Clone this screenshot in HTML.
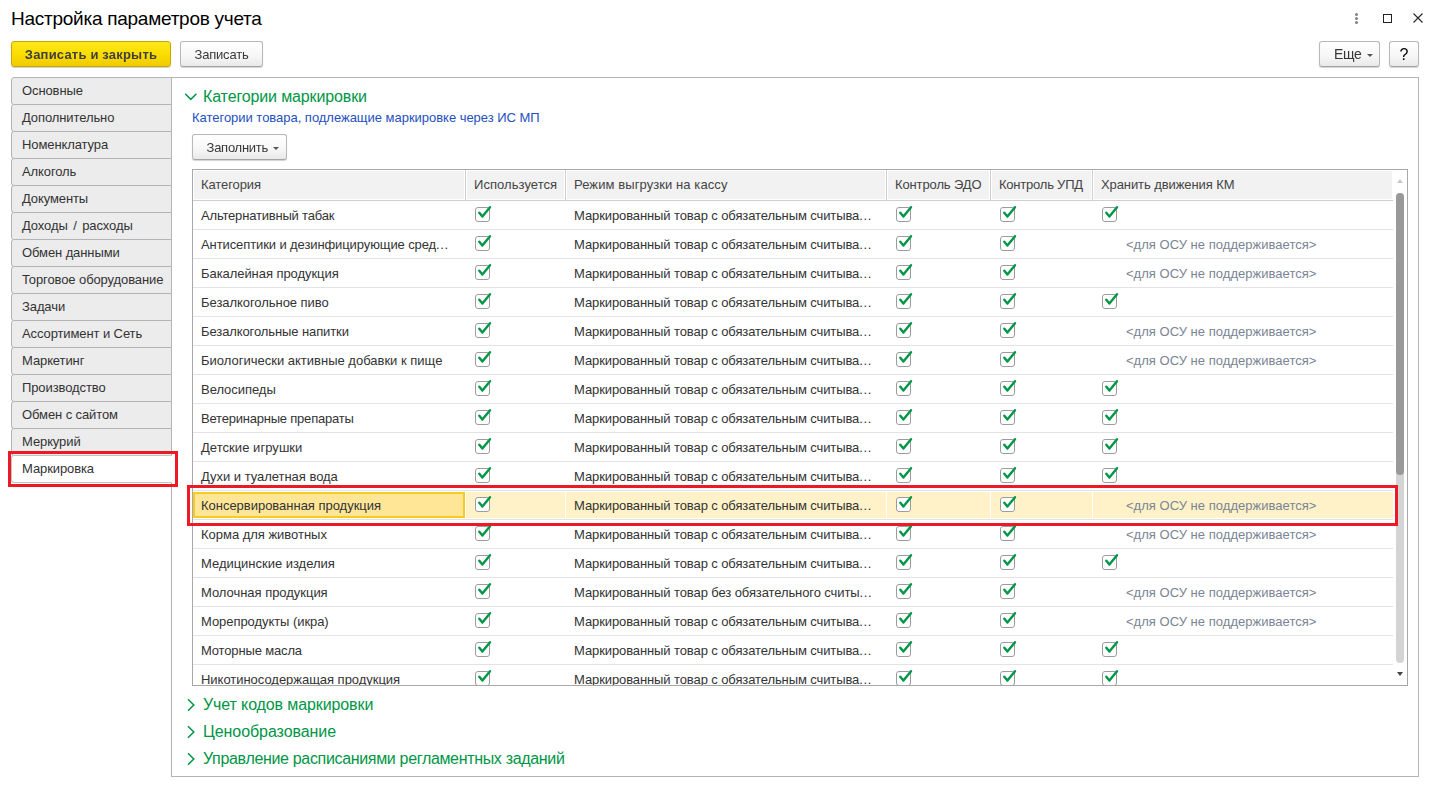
<!DOCTYPE html><html lang="ru"><head><meta charset="utf-8"><title>Настройка параметров учета</title><style>
*{box-sizing:border-box}
html,body{margin:0;padding:0}
body{width:1436px;height:786px;overflow:hidden;background:#fff;font-family:"Liberation Sans",sans-serif;font-size:13px;color:#333;position:relative}
.abs{position:absolute}
#title{left:11px;top:8px;font-size:19px;letter-spacing:-0.26px;line-height:22px;color:#000;white-space:nowrap}
.btn{position:absolute;top:41px;height:26px;border:1px solid #b8b8b8;border-bottom-color:#a4a4a4;border-radius:3px;background:linear-gradient(#fff,#f6f6f6 60%,#e9e9e9);box-shadow:0 1px 1px rgba(0,0,0,.18);font-size:13px;line-height:26px;text-align:center;color:#383838;white-space:nowrap;will-change:transform}
#b1{left:11px;width:160px;background:linear-gradient(#ffe818,#fadc00 55%,#efcb00);border-color:#c8a800;font-weight:bold;color:#404040;letter-spacing:0.19px}
#b2{left:180px;width:83px;letter-spacing:-0.2px}
#b3{left:1319px;width:61px}
#b4{left:1389px;width:30px;font-size:16px;color:#000;line-height:25px}
.tab{position:absolute;left:11px;width:161px;height:28px;border:1px solid #b4b4b4;border-radius:3px 0 0 3px;background:#ececec;padding-left:10px;line-height:25px;letter-spacing:-0.1px;white-space:nowrap;color:#333}
.tab.sel{background:#fff;border-color:#c4c4c4;border-right:none}
#panel{left:171px;top:77px;width:1248px;height:700px;border:1px solid #b4b4b4;background:#fff}
.sec{position:absolute;left:203px;font-size:16px;color:#009646;white-space:nowrap;line-height:20px}
.chev{position:absolute}
#sub{left:192px;top:110px;color:#2450c0;letter-spacing:-0.025px;white-space:nowrap;line-height:16px}
#fill{left:192px;top:134px;width:95px;height:26px}
#tbl{left:192px;top:169px;width:1216px;height:517px;border:1px solid #a8a8a8;overflow:hidden;background:#fff}
#hdr{position:absolute;left:1px;top:1px;width:1198px;height:28px;background:#f2f2f2}
#hline{position:absolute;left:0;top:30px;width:1200px;height:1px;background:#cfcfcf}
.hc{position:absolute;top:0px;height:30px;line-height:29px;padding-left:8px;white-space:nowrap;color:#444;border-left:1px solid #d0d0d0;box-shadow:inset 1px 0 0 #fff,-1px 0 0 #fff;letter-spacing:-0.1px}
.row{position:absolute;left:1px;width:1199px;height:29px;border-bottom:1px solid #e3e3e3}
.row::after{content:'';position:absolute;left:-1px;bottom:-1px;width:1px;height:1px;background:#e3e3e3}
.row.sel{background:#fff}
.row.sel .bg{position:absolute;left:0px;right:0;top:1px;bottom:1px;background:#fff2c8}
.row.sel .cur{position:absolute;left:-1px;top:1px;width:272px;height:26px;background:#ffe697;border:2px solid #f8cb22}
.vs{position:absolute;top:1px;height:26px;width:1px;background:#fff}
.c{position:absolute;top:0;height:28px;line-height:30px;white-space:nowrap;color:#333;letter-spacing:-0.1px}
.el{letter-spacing:0.65px}
.osu{letter-spacing:0}
.cb{position:absolute;top:4px}
.c.osu{color:#7a8494;letter-spacing:0.03px}
.red{position:absolute;border:3px solid #ec1a24}
</style></head><body>
<div id="title" class="abs">Настройка параметров учета</div>
<svg class="abs" style="left:1350px;top:8px" width="80" height="20" viewBox="0 0 80 20"><circle cx="6.5" cy="6.5" r="1.5" fill="#808080"/><circle cx="6.5" cy="10.5" r="1.5" fill="#808080"/><circle cx="6.5" cy="14.5" r="1.5" fill="#808080"/><rect x="33.5" y="6.5" width="8" height="8" fill="none" stroke="#222" stroke-width="1"/><path d="M63.5 5.5 L72.5 14.5 M72.5 5.5 L63.5 14.5" stroke="#2a2a2a" stroke-width="1.15" fill="none"/></svg>
<div id="b1" class="btn">Записать и закрыть</div>
<div id="b2" class="btn">Записать</div>
<div id="b3" class="btn" style="line-height:24px"><span style="font-size:14px;margin-left:8px;letter-spacing:-0.4px">Еще</span> <span class="arr" style="display:inline-block;width:0;height:0;border:3px solid transparent;border-top:3px solid #555;border-bottom:none;vertical-align:middle;margin-left:2px;position:relative;top:-0.5px"></span></div>
<div id="b4" class="btn">?</div>
<div id="panel" class="abs"></div>
<div class="tab" style="top:77px">Основные</div>
<div class="tab" style="top:104px">Дополнительно</div>
<div class="tab" style="top:131px">Номенклатура</div>
<div class="tab" style="top:158px">Алкоголь</div>
<div class="tab" style="top:185px">Документы</div>
<div class="tab" style="top:212px;word-spacing:2px">Доходы / расходы</div>
<div class="tab" style="top:239px">Обмен данными</div>
<div class="tab" style="top:266px">Торговое оборудование</div>
<div class="tab" style="top:293px">Задачи</div>
<div class="tab" style="top:320px">Ассортимент и Сеть</div>
<div class="tab" style="top:347px">Маркетинг</div>
<div class="tab" style="top:374px">Производство</div>
<div class="tab" style="top:401px">Обмен с сайтом</div>
<div class="tab" style="top:428px">Меркурий</div>
<div class="tab sel" style="top:455px">Маркировка</div>
<svg class="chev" style="left:184px;top:91px" width="14" height="12" viewBox="0 0 14 12"><path d="M1.2 2.8 L6.8 8.4 L12.4 2.8" fill="none" stroke="#009646" stroke-width="1.5"/></svg>
<div class="sec" style="top:87px;letter-spacing:-0.13px">Категории маркировки</div>
<div id="sub" class="abs">Категории товара, подлежащие маркировке через ИС МП</div>
<div id="fill" class="btn" style="padding-left:7px;line-height:25px;letter-spacing:-0.25px">Заполнить <span style="display:inline-block;width:0;height:0;border:3px solid transparent;border-top:3px solid #555;border-bottom:none;vertical-align:middle;margin-left:2px"></span></div>
<div id="tbl" class="abs">
<div id="hdr"></div><div id="hline"></div>
<div class="hc" style="left:1px;letter-spacing:-0.1px;border-left:none;box-shadow:none;padding-left:7px">Категория</div>
<div class="hc" style="left:272px;letter-spacing:0.06px">Используется</div>
<div class="hc" style="left:372px;letter-spacing:0.087px">Режим выгрузки на кассу</div>
<div class="hc" style="left:693px;letter-spacing:-0.12px">Контроль ЭДО</div>
<div class="hc" style="left:797px;letter-spacing:-0.22px">Контроль УПД</div>
<div class="hc" style="left:899px;letter-spacing:-0.09px">Хранить движения КМ</div>
<div class="row" style="top:31px">
<div class="c" style="left:7px;letter-spacing:-0.19px">Альтернативный табак</div>
<svg class="cb" style="left:281px" width="19" height="17" viewBox="0 0 19 17"><rect x="0.5" y="2.5" width="14" height="14" rx="2.5" ry="2.5" fill="#fff" stroke="#9c9c9c"/><path d="M4.3 7.8 L7.4 11.6 L15 2.2" fill="none" stroke="#009646" stroke-width="2.4" stroke-linejoin="round" stroke-linecap="round"/></svg>
<div class="c" style="left:380px">Маркированный товар с обязательным считыва<span class="el">...</span></div>
<svg class="cb" style="left:702px" width="19" height="17" viewBox="0 0 19 17"><rect x="0.5" y="2.5" width="14" height="14" rx="2.5" ry="2.5" fill="#fff" stroke="#9c9c9c"/><path d="M4.3 7.8 L7.4 11.6 L15 2.2" fill="none" stroke="#009646" stroke-width="2.4" stroke-linejoin="round" stroke-linecap="round"/></svg>
<svg class="cb" style="left:806px" width="19" height="17" viewBox="0 0 19 17"><rect x="0.5" y="2.5" width="14" height="14" rx="2.5" ry="2.5" fill="#fff" stroke="#9c9c9c"/><path d="M4.3 7.8 L7.4 11.6 L15 2.2" fill="none" stroke="#009646" stroke-width="2.4" stroke-linejoin="round" stroke-linecap="round"/></svg>
<svg class="cb" style="left:908px" width="19" height="17" viewBox="0 0 19 17"><rect x="0.5" y="2.5" width="14" height="14" rx="2.5" ry="2.5" fill="#fff" stroke="#9c9c9c"/><path d="M4.3 7.8 L7.4 11.6 L15 2.2" fill="none" stroke="#009646" stroke-width="2.4" stroke-linejoin="round" stroke-linecap="round"/></svg>
</div>
<div class="row" style="top:60px">
<div class="c" style="left:7px;letter-spacing:-0.1px">Антисептики и дезинфицирующие сред<span class="el">...</span></div>
<svg class="cb" style="left:281px" width="19" height="17" viewBox="0 0 19 17"><rect x="0.5" y="2.5" width="14" height="14" rx="2.5" ry="2.5" fill="#fff" stroke="#9c9c9c"/><path d="M4.3 7.8 L7.4 11.6 L15 2.2" fill="none" stroke="#009646" stroke-width="2.4" stroke-linejoin="round" stroke-linecap="round"/></svg>
<div class="c" style="left:380px">Маркированный товар с обязательным считыва<span class="el">...</span></div>
<svg class="cb" style="left:702px" width="19" height="17" viewBox="0 0 19 17"><rect x="0.5" y="2.5" width="14" height="14" rx="2.5" ry="2.5" fill="#fff" stroke="#9c9c9c"/><path d="M4.3 7.8 L7.4 11.6 L15 2.2" fill="none" stroke="#009646" stroke-width="2.4" stroke-linejoin="round" stroke-linecap="round"/></svg>
<svg class="cb" style="left:806px" width="19" height="17" viewBox="0 0 19 17"><rect x="0.5" y="2.5" width="14" height="14" rx="2.5" ry="2.5" fill="#fff" stroke="#9c9c9c"/><path d="M4.3 7.8 L7.4 11.6 L15 2.2" fill="none" stroke="#009646" stroke-width="2.4" stroke-linejoin="round" stroke-linecap="round"/></svg>
<div class="c osu" style="left:932px">&lt;для ОСУ не поддерживается&gt;</div>
</div>
<div class="row" style="top:89px">
<div class="c" style="left:7px;letter-spacing:-0.06px">Бакалейная продукция</div>
<svg class="cb" style="left:281px" width="19" height="17" viewBox="0 0 19 17"><rect x="0.5" y="2.5" width="14" height="14" rx="2.5" ry="2.5" fill="#fff" stroke="#9c9c9c"/><path d="M4.3 7.8 L7.4 11.6 L15 2.2" fill="none" stroke="#009646" stroke-width="2.4" stroke-linejoin="round" stroke-linecap="round"/></svg>
<div class="c" style="left:380px">Маркированный товар с обязательным считыва<span class="el">...</span></div>
<svg class="cb" style="left:702px" width="19" height="17" viewBox="0 0 19 17"><rect x="0.5" y="2.5" width="14" height="14" rx="2.5" ry="2.5" fill="#fff" stroke="#9c9c9c"/><path d="M4.3 7.8 L7.4 11.6 L15 2.2" fill="none" stroke="#009646" stroke-width="2.4" stroke-linejoin="round" stroke-linecap="round"/></svg>
<svg class="cb" style="left:806px" width="19" height="17" viewBox="0 0 19 17"><rect x="0.5" y="2.5" width="14" height="14" rx="2.5" ry="2.5" fill="#fff" stroke="#9c9c9c"/><path d="M4.3 7.8 L7.4 11.6 L15 2.2" fill="none" stroke="#009646" stroke-width="2.4" stroke-linejoin="round" stroke-linecap="round"/></svg>
<div class="c osu" style="left:932px">&lt;для ОСУ не поддерживается&gt;</div>
</div>
<div class="row" style="top:118px">
<div class="c" style="left:7px;letter-spacing:-0.05px">Безалкогольное пиво</div>
<svg class="cb" style="left:281px" width="19" height="17" viewBox="0 0 19 17"><rect x="0.5" y="2.5" width="14" height="14" rx="2.5" ry="2.5" fill="#fff" stroke="#9c9c9c"/><path d="M4.3 7.8 L7.4 11.6 L15 2.2" fill="none" stroke="#009646" stroke-width="2.4" stroke-linejoin="round" stroke-linecap="round"/></svg>
<div class="c" style="left:380px">Маркированный товар с обязательным считыва<span class="el">...</span></div>
<svg class="cb" style="left:702px" width="19" height="17" viewBox="0 0 19 17"><rect x="0.5" y="2.5" width="14" height="14" rx="2.5" ry="2.5" fill="#fff" stroke="#9c9c9c"/><path d="M4.3 7.8 L7.4 11.6 L15 2.2" fill="none" stroke="#009646" stroke-width="2.4" stroke-linejoin="round" stroke-linecap="round"/></svg>
<svg class="cb" style="left:806px" width="19" height="17" viewBox="0 0 19 17"><rect x="0.5" y="2.5" width="14" height="14" rx="2.5" ry="2.5" fill="#fff" stroke="#9c9c9c"/><path d="M4.3 7.8 L7.4 11.6 L15 2.2" fill="none" stroke="#009646" stroke-width="2.4" stroke-linejoin="round" stroke-linecap="round"/></svg>
<svg class="cb" style="left:908px" width="19" height="17" viewBox="0 0 19 17"><rect x="0.5" y="2.5" width="14" height="14" rx="2.5" ry="2.5" fill="#fff" stroke="#9c9c9c"/><path d="M4.3 7.8 L7.4 11.6 L15 2.2" fill="none" stroke="#009646" stroke-width="2.4" stroke-linejoin="round" stroke-linecap="round"/></svg>
</div>
<div class="row" style="top:147px">
<div class="c" style="left:7px;letter-spacing:-0.1px">Безалкогольные напитки</div>
<svg class="cb" style="left:281px" width="19" height="17" viewBox="0 0 19 17"><rect x="0.5" y="2.5" width="14" height="14" rx="2.5" ry="2.5" fill="#fff" stroke="#9c9c9c"/><path d="M4.3 7.8 L7.4 11.6 L15 2.2" fill="none" stroke="#009646" stroke-width="2.4" stroke-linejoin="round" stroke-linecap="round"/></svg>
<div class="c" style="left:380px">Маркированный товар с обязательным считыва<span class="el">...</span></div>
<svg class="cb" style="left:702px" width="19" height="17" viewBox="0 0 19 17"><rect x="0.5" y="2.5" width="14" height="14" rx="2.5" ry="2.5" fill="#fff" stroke="#9c9c9c"/><path d="M4.3 7.8 L7.4 11.6 L15 2.2" fill="none" stroke="#009646" stroke-width="2.4" stroke-linejoin="round" stroke-linecap="round"/></svg>
<svg class="cb" style="left:806px" width="19" height="17" viewBox="0 0 19 17"><rect x="0.5" y="2.5" width="14" height="14" rx="2.5" ry="2.5" fill="#fff" stroke="#9c9c9c"/><path d="M4.3 7.8 L7.4 11.6 L15 2.2" fill="none" stroke="#009646" stroke-width="2.4" stroke-linejoin="round" stroke-linecap="round"/></svg>
<div class="c osu" style="left:932px">&lt;для ОСУ не поддерживается&gt;</div>
</div>
<div class="row" style="top:176px">
<div class="c" style="left:7px;letter-spacing:0px">Биологически активные добавки к пище</div>
<svg class="cb" style="left:281px" width="19" height="17" viewBox="0 0 19 17"><rect x="0.5" y="2.5" width="14" height="14" rx="2.5" ry="2.5" fill="#fff" stroke="#9c9c9c"/><path d="M4.3 7.8 L7.4 11.6 L15 2.2" fill="none" stroke="#009646" stroke-width="2.4" stroke-linejoin="round" stroke-linecap="round"/></svg>
<div class="c" style="left:380px">Маркированный товар с обязательным считыва<span class="el">...</span></div>
<svg class="cb" style="left:702px" width="19" height="17" viewBox="0 0 19 17"><rect x="0.5" y="2.5" width="14" height="14" rx="2.5" ry="2.5" fill="#fff" stroke="#9c9c9c"/><path d="M4.3 7.8 L7.4 11.6 L15 2.2" fill="none" stroke="#009646" stroke-width="2.4" stroke-linejoin="round" stroke-linecap="round"/></svg>
<svg class="cb" style="left:806px" width="19" height="17" viewBox="0 0 19 17"><rect x="0.5" y="2.5" width="14" height="14" rx="2.5" ry="2.5" fill="#fff" stroke="#9c9c9c"/><path d="M4.3 7.8 L7.4 11.6 L15 2.2" fill="none" stroke="#009646" stroke-width="2.4" stroke-linejoin="round" stroke-linecap="round"/></svg>
<div class="c osu" style="left:932px">&lt;для ОСУ не поддерживается&gt;</div>
</div>
<div class="row" style="top:205px">
<div class="c" style="left:7px;letter-spacing:-0.04px">Велосипеды</div>
<svg class="cb" style="left:281px" width="19" height="17" viewBox="0 0 19 17"><rect x="0.5" y="2.5" width="14" height="14" rx="2.5" ry="2.5" fill="#fff" stroke="#9c9c9c"/><path d="M4.3 7.8 L7.4 11.6 L15 2.2" fill="none" stroke="#009646" stroke-width="2.4" stroke-linejoin="round" stroke-linecap="round"/></svg>
<div class="c" style="left:380px">Маркированный товар с обязательным считыва<span class="el">...</span></div>
<svg class="cb" style="left:702px" width="19" height="17" viewBox="0 0 19 17"><rect x="0.5" y="2.5" width="14" height="14" rx="2.5" ry="2.5" fill="#fff" stroke="#9c9c9c"/><path d="M4.3 7.8 L7.4 11.6 L15 2.2" fill="none" stroke="#009646" stroke-width="2.4" stroke-linejoin="round" stroke-linecap="round"/></svg>
<svg class="cb" style="left:806px" width="19" height="17" viewBox="0 0 19 17"><rect x="0.5" y="2.5" width="14" height="14" rx="2.5" ry="2.5" fill="#fff" stroke="#9c9c9c"/><path d="M4.3 7.8 L7.4 11.6 L15 2.2" fill="none" stroke="#009646" stroke-width="2.4" stroke-linejoin="round" stroke-linecap="round"/></svg>
<svg class="cb" style="left:908px" width="19" height="17" viewBox="0 0 19 17"><rect x="0.5" y="2.5" width="14" height="14" rx="2.5" ry="2.5" fill="#fff" stroke="#9c9c9c"/><path d="M4.3 7.8 L7.4 11.6 L15 2.2" fill="none" stroke="#009646" stroke-width="2.4" stroke-linejoin="round" stroke-linecap="round"/></svg>
</div>
<div class="row" style="top:234px">
<div class="c" style="left:7px;letter-spacing:-0.21px">Ветеринарные препараты</div>
<svg class="cb" style="left:281px" width="19" height="17" viewBox="0 0 19 17"><rect x="0.5" y="2.5" width="14" height="14" rx="2.5" ry="2.5" fill="#fff" stroke="#9c9c9c"/><path d="M4.3 7.8 L7.4 11.6 L15 2.2" fill="none" stroke="#009646" stroke-width="2.4" stroke-linejoin="round" stroke-linecap="round"/></svg>
<div class="c" style="left:380px">Маркированный товар с обязательным считыва<span class="el">...</span></div>
<svg class="cb" style="left:702px" width="19" height="17" viewBox="0 0 19 17"><rect x="0.5" y="2.5" width="14" height="14" rx="2.5" ry="2.5" fill="#fff" stroke="#9c9c9c"/><path d="M4.3 7.8 L7.4 11.6 L15 2.2" fill="none" stroke="#009646" stroke-width="2.4" stroke-linejoin="round" stroke-linecap="round"/></svg>
<svg class="cb" style="left:806px" width="19" height="17" viewBox="0 0 19 17"><rect x="0.5" y="2.5" width="14" height="14" rx="2.5" ry="2.5" fill="#fff" stroke="#9c9c9c"/><path d="M4.3 7.8 L7.4 11.6 L15 2.2" fill="none" stroke="#009646" stroke-width="2.4" stroke-linejoin="round" stroke-linecap="round"/></svg>
<svg class="cb" style="left:908px" width="19" height="17" viewBox="0 0 19 17"><rect x="0.5" y="2.5" width="14" height="14" rx="2.5" ry="2.5" fill="#fff" stroke="#9c9c9c"/><path d="M4.3 7.8 L7.4 11.6 L15 2.2" fill="none" stroke="#009646" stroke-width="2.4" stroke-linejoin="round" stroke-linecap="round"/></svg>
</div>
<div class="row" style="top:263px">
<div class="c" style="left:7px;letter-spacing:0.05px">Детские игрушки</div>
<svg class="cb" style="left:281px" width="19" height="17" viewBox="0 0 19 17"><rect x="0.5" y="2.5" width="14" height="14" rx="2.5" ry="2.5" fill="#fff" stroke="#9c9c9c"/><path d="M4.3 7.8 L7.4 11.6 L15 2.2" fill="none" stroke="#009646" stroke-width="2.4" stroke-linejoin="round" stroke-linecap="round"/></svg>
<div class="c" style="left:380px">Маркированный товар с обязательным считыва<span class="el">...</span></div>
<svg class="cb" style="left:702px" width="19" height="17" viewBox="0 0 19 17"><rect x="0.5" y="2.5" width="14" height="14" rx="2.5" ry="2.5" fill="#fff" stroke="#9c9c9c"/><path d="M4.3 7.8 L7.4 11.6 L15 2.2" fill="none" stroke="#009646" stroke-width="2.4" stroke-linejoin="round" stroke-linecap="round"/></svg>
<svg class="cb" style="left:806px" width="19" height="17" viewBox="0 0 19 17"><rect x="0.5" y="2.5" width="14" height="14" rx="2.5" ry="2.5" fill="#fff" stroke="#9c9c9c"/><path d="M4.3 7.8 L7.4 11.6 L15 2.2" fill="none" stroke="#009646" stroke-width="2.4" stroke-linejoin="round" stroke-linecap="round"/></svg>
<svg class="cb" style="left:908px" width="19" height="17" viewBox="0 0 19 17"><rect x="0.5" y="2.5" width="14" height="14" rx="2.5" ry="2.5" fill="#fff" stroke="#9c9c9c"/><path d="M4.3 7.8 L7.4 11.6 L15 2.2" fill="none" stroke="#009646" stroke-width="2.4" stroke-linejoin="round" stroke-linecap="round"/></svg>
</div>
<div class="row" style="top:292px">
<div class="c" style="left:7px;letter-spacing:-0.03px">Духи и туалетная вода</div>
<svg class="cb" style="left:281px" width="19" height="17" viewBox="0 0 19 17"><rect x="0.5" y="2.5" width="14" height="14" rx="2.5" ry="2.5" fill="#fff" stroke="#9c9c9c"/><path d="M4.3 7.8 L7.4 11.6 L15 2.2" fill="none" stroke="#009646" stroke-width="2.4" stroke-linejoin="round" stroke-linecap="round"/></svg>
<div class="c" style="left:380px">Маркированный товар с обязательным считыва<span class="el">...</span></div>
<svg class="cb" style="left:702px" width="19" height="17" viewBox="0 0 19 17"><rect x="0.5" y="2.5" width="14" height="14" rx="2.5" ry="2.5" fill="#fff" stroke="#9c9c9c"/><path d="M4.3 7.8 L7.4 11.6 L15 2.2" fill="none" stroke="#009646" stroke-width="2.4" stroke-linejoin="round" stroke-linecap="round"/></svg>
<svg class="cb" style="left:806px" width="19" height="17" viewBox="0 0 19 17"><rect x="0.5" y="2.5" width="14" height="14" rx="2.5" ry="2.5" fill="#fff" stroke="#9c9c9c"/><path d="M4.3 7.8 L7.4 11.6 L15 2.2" fill="none" stroke="#009646" stroke-width="2.4" stroke-linejoin="round" stroke-linecap="round"/></svg>
<svg class="cb" style="left:908px" width="19" height="17" viewBox="0 0 19 17"><rect x="0.5" y="2.5" width="14" height="14" rx="2.5" ry="2.5" fill="#fff" stroke="#9c9c9c"/><path d="M4.3 7.8 L7.4 11.6 L15 2.2" fill="none" stroke="#009646" stroke-width="2.4" stroke-linejoin="round" stroke-linecap="round"/></svg>
</div>
<div class="row sel" style="top:321px">
<div class="bg"></div><div class="cur"></div>
<div class="vs" style="left:271px"></div>
<div class="vs" style="left:371px"></div>
<div class="vs" style="left:692px"></div>
<div class="vs" style="left:796px"></div>
<div class="vs" style="left:898px"></div>
<div class="c" style="left:7px;letter-spacing:-0.02px">Консервированная продукция</div>
<svg class="cb" style="left:281px" width="19" height="17" viewBox="0 0 19 17"><rect x="0.5" y="2.5" width="14" height="14" rx="2.5" ry="2.5" fill="#fff" stroke="#9c9c9c"/><path d="M4.3 7.8 L7.4 11.6 L15 2.2" fill="none" stroke="#009646" stroke-width="2.4" stroke-linejoin="round" stroke-linecap="round"/></svg>
<div class="c" style="left:380px">Маркированный товар с обязательным считыва<span class="el">...</span></div>
<svg class="cb" style="left:702px" width="19" height="17" viewBox="0 0 19 17"><rect x="0.5" y="2.5" width="14" height="14" rx="2.5" ry="2.5" fill="#fff" stroke="#9c9c9c"/><path d="M4.3 7.8 L7.4 11.6 L15 2.2" fill="none" stroke="#009646" stroke-width="2.4" stroke-linejoin="round" stroke-linecap="round"/></svg>
<svg class="cb" style="left:806px" width="19" height="17" viewBox="0 0 19 17"><rect x="0.5" y="2.5" width="14" height="14" rx="2.5" ry="2.5" fill="#fff" stroke="#9c9c9c"/><path d="M4.3 7.8 L7.4 11.6 L15 2.2" fill="none" stroke="#009646" stroke-width="2.4" stroke-linejoin="round" stroke-linecap="round"/></svg>
<div class="c osu" style="left:932px">&lt;для ОСУ не поддерживается&gt;</div>
</div>
<div class="row" style="top:350px">
<div class="c" style="left:7px;letter-spacing:-0.02px">Корма для животных</div>
<svg class="cb" style="left:281px" width="19" height="17" viewBox="0 0 19 17"><rect x="0.5" y="2.5" width="14" height="14" rx="2.5" ry="2.5" fill="#fff" stroke="#9c9c9c"/><path d="M4.3 7.8 L7.4 11.6 L15 2.2" fill="none" stroke="#009646" stroke-width="2.4" stroke-linejoin="round" stroke-linecap="round"/></svg>
<div class="c" style="left:380px">Маркированный товар с обязательным считыва<span class="el">...</span></div>
<svg class="cb" style="left:702px" width="19" height="17" viewBox="0 0 19 17"><rect x="0.5" y="2.5" width="14" height="14" rx="2.5" ry="2.5" fill="#fff" stroke="#9c9c9c"/><path d="M4.3 7.8 L7.4 11.6 L15 2.2" fill="none" stroke="#009646" stroke-width="2.4" stroke-linejoin="round" stroke-linecap="round"/></svg>
<svg class="cb" style="left:806px" width="19" height="17" viewBox="0 0 19 17"><rect x="0.5" y="2.5" width="14" height="14" rx="2.5" ry="2.5" fill="#fff" stroke="#9c9c9c"/><path d="M4.3 7.8 L7.4 11.6 L15 2.2" fill="none" stroke="#009646" stroke-width="2.4" stroke-linejoin="round" stroke-linecap="round"/></svg>
<div class="c osu" style="left:932px">&lt;для ОСУ не поддерживается&gt;</div>
</div>
<div class="row" style="top:379px">
<div class="c" style="left:7px;letter-spacing:-0.02px">Медицинские изделия</div>
<svg class="cb" style="left:281px" width="19" height="17" viewBox="0 0 19 17"><rect x="0.5" y="2.5" width="14" height="14" rx="2.5" ry="2.5" fill="#fff" stroke="#9c9c9c"/><path d="M4.3 7.8 L7.4 11.6 L15 2.2" fill="none" stroke="#009646" stroke-width="2.4" stroke-linejoin="round" stroke-linecap="round"/></svg>
<div class="c" style="left:380px">Маркированный товар с обязательным считыва<span class="el">...</span></div>
<svg class="cb" style="left:702px" width="19" height="17" viewBox="0 0 19 17"><rect x="0.5" y="2.5" width="14" height="14" rx="2.5" ry="2.5" fill="#fff" stroke="#9c9c9c"/><path d="M4.3 7.8 L7.4 11.6 L15 2.2" fill="none" stroke="#009646" stroke-width="2.4" stroke-linejoin="round" stroke-linecap="round"/></svg>
<svg class="cb" style="left:806px" width="19" height="17" viewBox="0 0 19 17"><rect x="0.5" y="2.5" width="14" height="14" rx="2.5" ry="2.5" fill="#fff" stroke="#9c9c9c"/><path d="M4.3 7.8 L7.4 11.6 L15 2.2" fill="none" stroke="#009646" stroke-width="2.4" stroke-linejoin="round" stroke-linecap="round"/></svg>
<svg class="cb" style="left:908px" width="19" height="17" viewBox="0 0 19 17"><rect x="0.5" y="2.5" width="14" height="14" rx="2.5" ry="2.5" fill="#fff" stroke="#9c9c9c"/><path d="M4.3 7.8 L7.4 11.6 L15 2.2" fill="none" stroke="#009646" stroke-width="2.4" stroke-linejoin="round" stroke-linecap="round"/></svg>
</div>
<div class="row" style="top:408px">
<div class="c" style="left:7px;letter-spacing:-0.03px">Молочная продукция</div>
<svg class="cb" style="left:281px" width="19" height="17" viewBox="0 0 19 17"><rect x="0.5" y="2.5" width="14" height="14" rx="2.5" ry="2.5" fill="#fff" stroke="#9c9c9c"/><path d="M4.3 7.8 L7.4 11.6 L15 2.2" fill="none" stroke="#009646" stroke-width="2.4" stroke-linejoin="round" stroke-linecap="round"/></svg>
<div class="c" style="left:380px">Маркированный товар без обязательного считы<span class="el">...</span></div>
<svg class="cb" style="left:702px" width="19" height="17" viewBox="0 0 19 17"><rect x="0.5" y="2.5" width="14" height="14" rx="2.5" ry="2.5" fill="#fff" stroke="#9c9c9c"/><path d="M4.3 7.8 L7.4 11.6 L15 2.2" fill="none" stroke="#009646" stroke-width="2.4" stroke-linejoin="round" stroke-linecap="round"/></svg>
<svg class="cb" style="left:806px" width="19" height="17" viewBox="0 0 19 17"><rect x="0.5" y="2.5" width="14" height="14" rx="2.5" ry="2.5" fill="#fff" stroke="#9c9c9c"/><path d="M4.3 7.8 L7.4 11.6 L15 2.2" fill="none" stroke="#009646" stroke-width="2.4" stroke-linejoin="round" stroke-linecap="round"/></svg>
<div class="c osu" style="left:932px">&lt;для ОСУ не поддерживается&gt;</div>
</div>
<div class="row" style="top:437px">
<div class="c" style="left:7px;letter-spacing:-0.06px">Морепродукты (икра)</div>
<svg class="cb" style="left:281px" width="19" height="17" viewBox="0 0 19 17"><rect x="0.5" y="2.5" width="14" height="14" rx="2.5" ry="2.5" fill="#fff" stroke="#9c9c9c"/><path d="M4.3 7.8 L7.4 11.6 L15 2.2" fill="none" stroke="#009646" stroke-width="2.4" stroke-linejoin="round" stroke-linecap="round"/></svg>
<div class="c" style="left:380px">Маркированный товар с обязательным считыва<span class="el">...</span></div>
<svg class="cb" style="left:702px" width="19" height="17" viewBox="0 0 19 17"><rect x="0.5" y="2.5" width="14" height="14" rx="2.5" ry="2.5" fill="#fff" stroke="#9c9c9c"/><path d="M4.3 7.8 L7.4 11.6 L15 2.2" fill="none" stroke="#009646" stroke-width="2.4" stroke-linejoin="round" stroke-linecap="round"/></svg>
<svg class="cb" style="left:806px" width="19" height="17" viewBox="0 0 19 17"><rect x="0.5" y="2.5" width="14" height="14" rx="2.5" ry="2.5" fill="#fff" stroke="#9c9c9c"/><path d="M4.3 7.8 L7.4 11.6 L15 2.2" fill="none" stroke="#009646" stroke-width="2.4" stroke-linejoin="round" stroke-linecap="round"/></svg>
<div class="c osu" style="left:932px">&lt;для ОСУ не поддерживается&gt;</div>
</div>
<div class="row" style="top:466px">
<div class="c" style="left:7px;letter-spacing:-0.15px">Моторные масла</div>
<svg class="cb" style="left:281px" width="19" height="17" viewBox="0 0 19 17"><rect x="0.5" y="2.5" width="14" height="14" rx="2.5" ry="2.5" fill="#fff" stroke="#9c9c9c"/><path d="M4.3 7.8 L7.4 11.6 L15 2.2" fill="none" stroke="#009646" stroke-width="2.4" stroke-linejoin="round" stroke-linecap="round"/></svg>
<div class="c" style="left:380px">Маркированный товар с обязательным считыва<span class="el">...</span></div>
<svg class="cb" style="left:702px" width="19" height="17" viewBox="0 0 19 17"><rect x="0.5" y="2.5" width="14" height="14" rx="2.5" ry="2.5" fill="#fff" stroke="#9c9c9c"/><path d="M4.3 7.8 L7.4 11.6 L15 2.2" fill="none" stroke="#009646" stroke-width="2.4" stroke-linejoin="round" stroke-linecap="round"/></svg>
<svg class="cb" style="left:806px" width="19" height="17" viewBox="0 0 19 17"><rect x="0.5" y="2.5" width="14" height="14" rx="2.5" ry="2.5" fill="#fff" stroke="#9c9c9c"/><path d="M4.3 7.8 L7.4 11.6 L15 2.2" fill="none" stroke="#009646" stroke-width="2.4" stroke-linejoin="round" stroke-linecap="round"/></svg>
<svg class="cb" style="left:908px" width="19" height="17" viewBox="0 0 19 17"><rect x="0.5" y="2.5" width="14" height="14" rx="2.5" ry="2.5" fill="#fff" stroke="#9c9c9c"/><path d="M4.3 7.8 L7.4 11.6 L15 2.2" fill="none" stroke="#009646" stroke-width="2.4" stroke-linejoin="round" stroke-linecap="round"/></svg>
</div>
<div class="row" style="top:495px">
<div class="c" style="left:7px;letter-spacing:-0.03px">Никотиносодержащая продукция</div>
<svg class="cb" style="left:281px" width="19" height="17" viewBox="0 0 19 17"><rect x="0.5" y="2.5" width="14" height="14" rx="2.5" ry="2.5" fill="#fff" stroke="#9c9c9c"/><path d="M4.3 7.8 L7.4 11.6 L15 2.2" fill="none" stroke="#009646" stroke-width="2.4" stroke-linejoin="round" stroke-linecap="round"/></svg>
<div class="c" style="left:380px">Маркированный товар с обязательным считыва<span class="el">...</span></div>
<svg class="cb" style="left:702px" width="19" height="17" viewBox="0 0 19 17"><rect x="0.5" y="2.5" width="14" height="14" rx="2.5" ry="2.5" fill="#fff" stroke="#9c9c9c"/><path d="M4.3 7.8 L7.4 11.6 L15 2.2" fill="none" stroke="#009646" stroke-width="2.4" stroke-linejoin="round" stroke-linecap="round"/></svg>
<svg class="cb" style="left:806px" width="19" height="17" viewBox="0 0 19 17"><rect x="0.5" y="2.5" width="14" height="14" rx="2.5" ry="2.5" fill="#fff" stroke="#9c9c9c"/><path d="M4.3 7.8 L7.4 11.6 L15 2.2" fill="none" stroke="#009646" stroke-width="2.4" stroke-linejoin="round" stroke-linecap="round"/></svg>
<svg class="cb" style="left:908px" width="19" height="17" viewBox="0 0 19 17"><rect x="0.5" y="2.5" width="14" height="14" rx="2.5" ry="2.5" fill="#fff" stroke="#9c9c9c"/><path d="M4.3 7.8 L7.4 11.6 L15 2.2" fill="none" stroke="#009646" stroke-width="2.4" stroke-linejoin="round" stroke-linecap="round"/></svg>
</div>
<div style="position:absolute;left:1203px;top:23px;width:8px;height:470px;background:#d4d4d4;border-radius:4px"></div>
<div style="position:absolute;left:1203px;top:23px;width:8px;height:282px;background:#999;border-radius:4px"></div>
<div style="position:absolute;left:1204px;top:9px;width:0;height:0;border:3.5px solid transparent;border-bottom:4px solid #c8c8c8;border-top:none"></div>
<div style="position:absolute;left:1204px;top:502px;width:0;height:0;border:3.5px solid transparent;border-top:4px solid #444;border-bottom:none"></div>
</div>
<svg class="chev" style="left:186px;top:697.5px" width="10" height="14" viewBox="0 0 10 14"><path d="M2 1.3 L7.8 7 L2 12.7" fill="none" stroke="#009646" stroke-width="1.5"/></svg>
<div class="sec" style="top:695px;letter-spacing:-0.11px">Учет кодов маркировки</div>
<svg class="chev" style="left:186px;top:724.5px" width="10" height="14" viewBox="0 0 10 14"><path d="M2 1.3 L7.8 7 L2 12.7" fill="none" stroke="#009646" stroke-width="1.5"/></svg>
<div class="sec" style="top:722px;letter-spacing:-0.07px">Ценообразование</div>
<svg class="chev" style="left:186px;top:751.5px" width="10" height="14" viewBox="0 0 10 14"><path d="M2 1.3 L7.8 7 L2 12.7" fill="none" stroke="#009646" stroke-width="1.5"/></svg>
<div class="sec" style="top:749px;letter-spacing:-0.33px">Управление расписаниями регламентных заданий</div>
<div class="red" style="left:8px;top:451px;width:170px;height:36px"></div>
<div class="red" style="left:187px;top:485px;width:1211px;height:41px"></div>
</body></html>
